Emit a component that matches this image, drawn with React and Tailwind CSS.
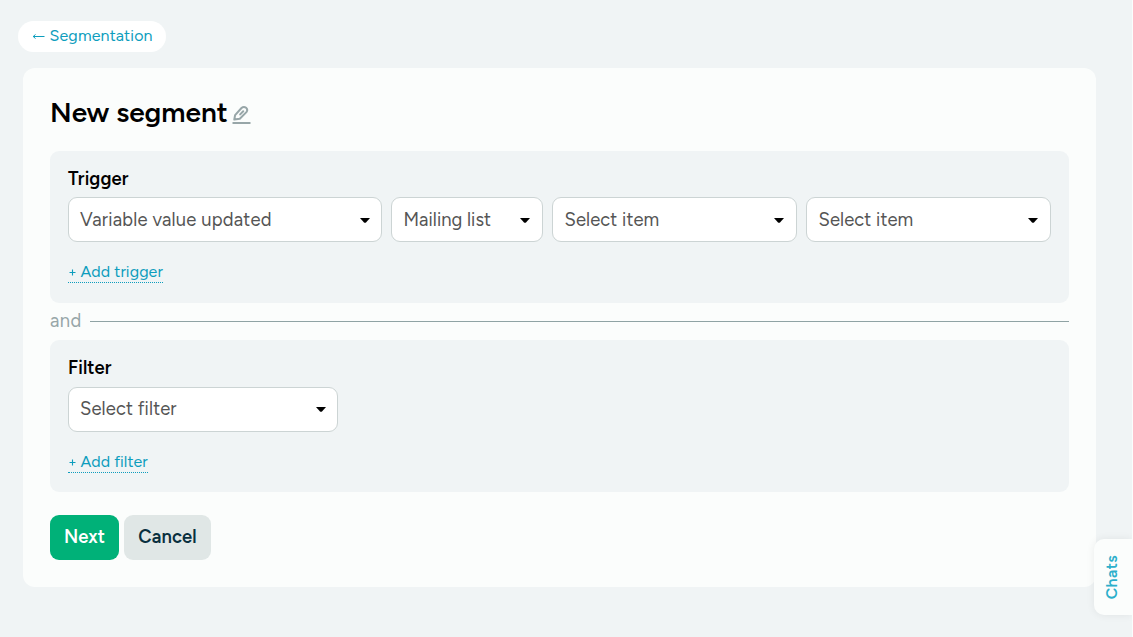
import React, { useState } from 'react'

function Caret() {
  return (
    <svg className="w-[10px] h-[5px] shrink-0 mt-[2px]" viewBox="0 0 10 5">
      <path d="M0 0H10L6 4.4Q5 5.3 4 4.4Z" fill="#000" />
    </svg>
  )
}

function Select({ label, className }) {
  return (
    <button
      type="button"
      className={`flex h-[45px] items-center justify-between rounded-[9px] border border-[#ccd4d4] bg-white text-[18.4px] text-[#555] ${className}`}
    >
      <span className="whitespace-nowrap leading-6">{label}</span>
      <Caret />
    </button>
  )
}

function AddLink({ children, className }) {
  return (
    <button
      type="button"
      className={`flex h-[21px] whitespace-nowrap border-b border-dotted border-[#0d9dbd] text-left text-[16px] leading-5 text-[#0d9dbd] ${className}`}
    >
      <svg className="mr-[4.5px] mt-[6px] h-[8px] w-[8px] shrink-0" viewBox="0 0 8 8" fill="none" stroke="currentColor" strokeWidth="1.1">
        <path d="M4.5 1.5V7.5M1.5 4.5H7.5" />
      </svg>
      <span>{children}</span>
    </button>
  )
}

export default function App() {
  const [name] = useState('New segment')

  return (
    <div className="relative h-[637px] w-[1133px] overflow-hidden border-r border-[#fbfdfc] bg-[#f0f4f5] pt-[21px] font-['Figtree','Inter',sans-serif]">
      {/* Back link */}
      <a className="ml-[18px] flex h-[31px] w-[148px] items-center rounded-full bg-white pl-[14px] text-[16px] text-[#0d9dbd]">
        <svg className="mr-[4.5px] h-[9px] w-[13px] shrink-0" viewBox="0 0 13 9" fill="none" stroke="currentColor" strokeWidth="1">
          <path d="M1 4.5H12.5M3.5 2.5L1.2 4.5L3.5 6.5" />
        </svg>
        <span className="-mt-[2px] leading-5 tracking-[0.15px]">Segmentation</span>
      </a>

      <div className="ml-[23px] mt-4 h-[519px] w-[1073px] rounded-xl bg-[#fbfdfc] px-[27px] pt-[27px]">
        {/* Title */}
        <div className="flex h-9 items-center">
          <h1 className="-mt-[2px] w-[182px] whitespace-nowrap text-[28px] font-semibold leading-9 text-black">{name}</h1>
          <svg className="mt-[4px] h-[20px] w-[19px] shrink-0" viewBox="0 0 19 20" fill="none" stroke="#97a6a8" strokeWidth="2">
            <path d="M2.3 14.5L3.1 10.1L9.5 3Q11.8 1 14.1 2.8Q16.2 4.7 14.4 7.1L7.8 13.7ZM8.2 9.4L11.2 6.2" strokeLinejoin="round" strokeLinecap="round" />
            <path d="M0.5 18H18.5" />
          </svg>
        </div>

        {/* Trigger */}
        <div className="mt-5 h-[152px] rounded-[9px] bg-[#f0f4f5] px-[18px] pt-4">
          <h2 className="mb-[6px] h-6 text-[18.4px] font-semibold leading-6 tracking-[0.1px] text-black">Trigger</h2>
          <div className="flex gap-[9px]">
            <Select label="Variable value updated" className="w-[314px] pl-[11px] pr-[11px] tracking-[0.2px]" />
            <Select label="Mailing list" className="w-[152px] pl-[11.5px] pr-[12px] tracking-[0.05px]" />
            <Select label="Select item" className="w-[245px] pl-[11.5px] pr-[12px] tracking-[0.1px]" />
            <Select label="Select item" className="w-[245px] pl-[11.5px] pr-[12px] tracking-[0.1px]" />
          </div>
          <AddLink className="mt-5 w-[95px] tracking-[0.08px]">Add trigger</AddLink>
        </div>

        {/* Divider */}
        <div className="flex h-[37px] items-center">
          <span className="-mt-px w-10 text-[18.4px] leading-6 tracking-[0.4px] text-[#97a6a8]">and</span>
          <div className="h-px flex-1 bg-[#8fa3a4]" />
        </div>

        {/* Filter */}
        <div className="h-[152px] rounded-[9px] bg-[#f0f4f5] px-[18px] pt-4">
          <h2 className="mb-[7px] h-6 text-[18.4px] font-semibold leading-6 tracking-[0.1px] text-black">Filter</h2>
          <Select label="Select filter" className="w-[270px] pb-[2px] pl-[11px] pr-[11px] tracking-[0.12px]" />
          <AddLink className="mt-5 w-[80px] tracking-[0.05px]">Add filter</AddLink>
        </div>

        <div className="mt-[23px] flex gap-[5px]">
          <button type="button" className="h-[45px] w-[69px] rounded-[9px] bg-[#00b178] pt-px text-[18.4px] font-semibold text-white">Next</button>
          <button type="button" className="h-[45px] w-[87px] rounded-[9px] bg-[#e0e7e6] pt-px text-[18.4px] font-semibold tracking-[0.1px] text-[#09303f]">Cancel</button>
        </div>
      </div>

      {/* Chats tab */}
      <div className="absolute right-0 top-[539px] flex h-[76px] w-[38px] items-center justify-center rounded-l-[10px] bg-[#fbfdfc] pr-[2px] shadow-[0_0_8px_rgba(0,0,0,0.07)]">
        <span className="rotate-180 text-[16px] font-semibold leading-5 tracking-[0.3px] text-[#2cafcb] [writing-mode:vertical-rl]">Chats</span>
      </div>
    </div>
  )
}
